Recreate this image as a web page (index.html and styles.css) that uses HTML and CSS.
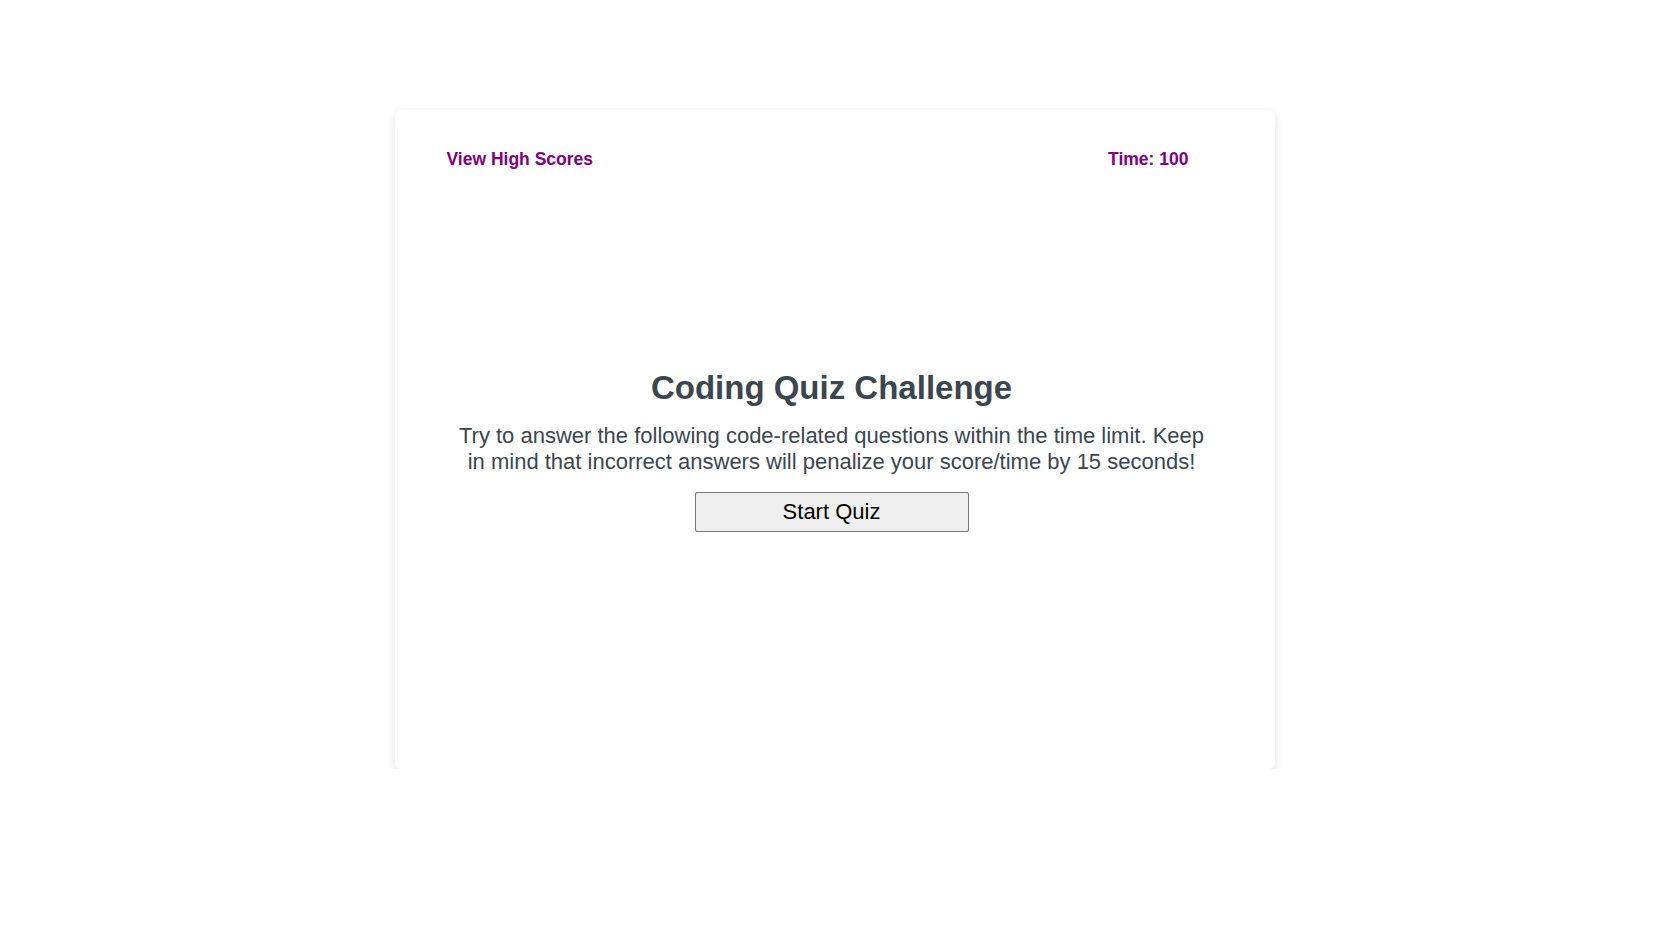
FILE: index.html
```html
<!DOCTYPE html>
<html>
<head>
<meta charset="utf-8">
<title>Coding Quiz</title>
<link rel="stylesheet" href="styles.css">
</head>
<body>
<div class="card">
  <header class="top">
    <a class="link" href="#">View High Scores</a>
    <span class="timer">Time: 100</span>
  </header>
  <main class="intro">
    <h1 class="title">Coding Quiz Challenge</h1>
    <p class="desc">Try to answer the following code-related questions within the time limit. Keep in mind that incorrect answers will penalize your score/time by 15 seconds!</p>
    <button class="start">Start Quiz</button>
  </main>
</div>
</body>
</html>
```
FILE: styles.css
```css
html, body {
  margin: 0;
  padding: 0;
  background: #fff;
  font-family: "Liberation Sans", Arial, sans-serif;
}
body {
  padding-top: 110px;
}
.card {
  width: 880px;
  height: 659px;
  margin: 0 auto;
  box-sizing: border-box;
  border-radius: 6px;
  background: #fff;
  box-shadow: 0 3px 10px rgba(0, 0, 0, 0.12);
  display: flex;
  flex-direction: column;
}
.top {
  display: flex;
  justify-content: space-between;
  padding: 39px 86px 0 52px;
  font-weight: bold;
  font-size: 17.5px;
  color: #800080;
}
.link {
  color: #800080;
  text-decoration: none;
}
.intro {
  flex: 1;
  display: flex;
  flex-direction: column;
  align-items: center;
  justify-content: center;
  padding: 0 67px 39px 61px;
  text-align: center;
  color: #3b4651;
}
.title {
  margin: 0 0 16px;
  font-size: 33px;
  font-weight: bold;
}
.desc {
  margin: 0 0 17px;
  font-size: 22px;
  line-height: 26px;
}
.start {
  width: 274px;
  height: 40px;
  font-family: "Liberation Sans", Arial, sans-serif;
  font-size: 22px;
  color: #000;
  background: #efefef;
  border: 1px solid #767676;
  border-radius: 2px;
}
```
